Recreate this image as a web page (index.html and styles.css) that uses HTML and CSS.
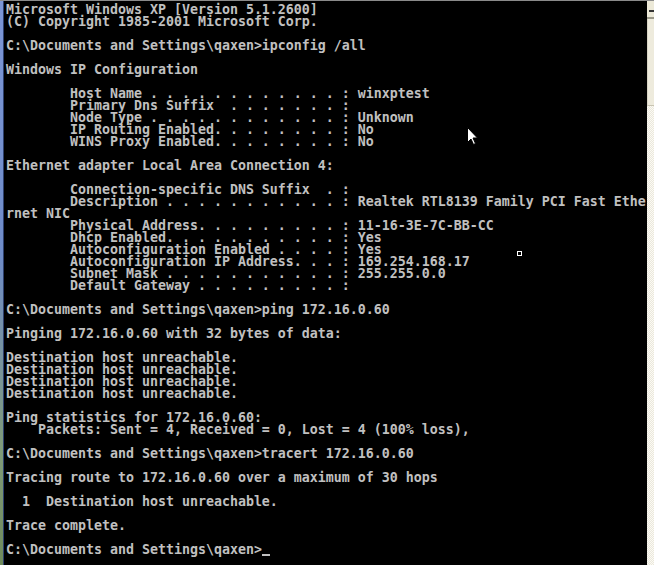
FILE: index.html
```html
<!DOCTYPE html>
<html>
<head>
<meta charset="utf-8">
<link rel="stylesheet" href="styles.css">
</head>
<body>
<div class="window">
  <div class="frame"></div>
  <div class="console">
<pre class="screen">Microsoft Windows XP [Version 5.1.2600]
(C) Copyright 1985-2001 Microsoft Corp.

C:\Documents and Settings\qaxen>ipconfig /all

Windows IP Configuration

        Host Name . . . . . . . . . . . . : winxptest
        Primary Dns Suffix  . . . . . . . :
        Node Type . . . . . . . . . . . . : Unknown
        IP Routing Enabled. . . . . . . . : No
        WINS Proxy Enabled. . . . . . . . : No

Ethernet adapter Local Area Connection 4:

        Connection-specific DNS Suffix  . :
        Description . . . . . . . . . . . : Realtek RTL8139 Family PCI Fast Ethe
rnet NIC
        Physical Address. . . . . . . . . : 11-16-3E-7C-BB-CC
        Dhcp Enabled. . . . . . . . . . . : Yes
        Autoconfiguration Enabled . . . . : Yes
        Autoconfiguration IP Address. . . : 169.254.168.17
        Subnet Mask . . . . . . . . . . . : 255.255.0.0
        Default Gateway . . . . . . . . . :

C:\Documents and Settings\qaxen>ping 172.16.0.60

Pinging 172.16.0.60 with 32 bytes of data:

Destination host unreachable.
Destination host unreachable.
Destination host unreachable.
Destination host unreachable.

Ping statistics for 172.16.0.60:
    Packets: Sent = 4, Received = 0, Lost = 4 (100% loss),

C:\Documents and Settings\qaxen>tracert 172.16.0.60

Tracing route to 172.16.0.60 over a maximum of 30 hops

  1  Destination host unreachable.

Trace complete.

C:\Documents and Settings\qaxen&gt;<span class="caret"></span></pre>
    <svg class="pointer" width="12" height="19" viewBox="0 0 12 19">
      <path d="M0.5 0.5 L0.5 15.5 L4 12 L6.5 17.5 L8.5 16.5 L6 11 L10.5 11 Z" fill="#fff" stroke="#000" stroke-width="1"/>
    </svg>
    <div class="marker"></div>
  </div>
  <div class="scrollbar">
    <div class="sb-button"><span class="sb-arrow"></span></div>
    <div class="sb-thumb"></div>
    <div class="sb-track"></div>
  </div>
</div>
</body>
</html>
```

FILE: styles.css
```css
html, body {
  margin: 0;
  padding: 0;
  background: #000;
}

.window {
  display: flex;
  width: 654px;
  height: 565px;
  overflow: hidden;
  border-top: 1px solid #8a8a8a;
  box-sizing: border-box;
}

.frame {
  width: 4px;
  flex: none;
  background: linear-gradient(to bottom, #7c96d6 0%, #6f8cc8 45%, #7f9a78 80%, #6f8a5c 100%);
  border-right: 1px solid #2c3f6e;
  box-sizing: border-box;
}

.console {
  position: relative;
  flex: 1;
  background: #000;
  padding: 3px 0 0 2px;
}

.screen {
  margin: 0;
  font-family: "DejaVu Sans Mono", "Liberation Mono", monospace;
  font-weight: bold;
  font-size: 13.29px;
  line-height: 12px;
  color: #c0c0c0;
  white-space: pre;
}

.caret {
  display: inline-block;
  width: 8px;
  height: 2px;
  background: #c0c0c0;
  vertical-align: -2px;
}

.pointer {
  position: absolute;
  left: 463px;
  top: 126px;
}

.marker {
  position: absolute;
  left: 513px;
  top: 250px;
  width: 3px;
  height: 3px;
  border: 1px solid #fff;
}

.scrollbar {
  width: 7px;
  flex: none;
  display: flex;
  flex-direction: column;
  background: #f4f2ea;
}

.sb-button {
  height: 16px;
  background: #ece9d8;
  border-bottom: 2px solid #9a9889;
  position: relative;
}

.sb-arrow {
  position: absolute;
  left: 2px;
  top: 9px;
  width: 5px;
  height: 2px;
  background: #333;
}

.sb-thumb {
  height: 86px;
  background: #eeebdd;
  border-left: 1px solid #d8d4c4;
  border-bottom: 1px solid #c8c4b2;
}

.sb-track {
  flex: 1;
  background-color: #f6f4ec;
  background-image: repeating-conic-gradient(#fbfaf4 0 25%, #ebe8dc 0 50%);
  background-size: 2px 2px;
}
```
